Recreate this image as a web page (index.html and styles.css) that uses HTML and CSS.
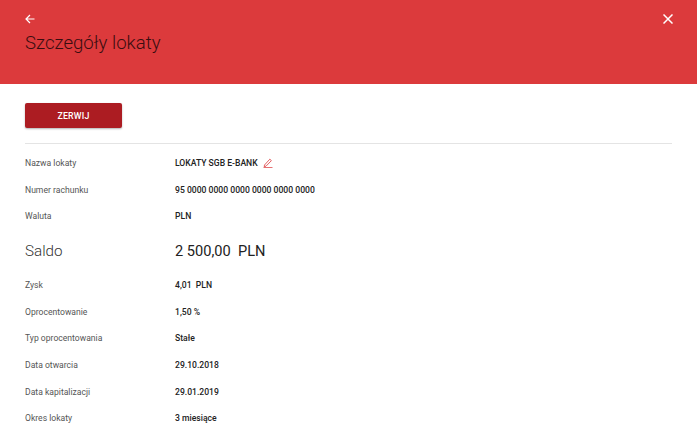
FILE: index.html
```html
<!DOCTYPE html>
<html lang="pl">

<head>
    <meta charset="UTF-8">
    <meta name="viewport" content="width=device-width, initial-scale=1.0">
    <title>Szczegóły lokaty</title>
    <link rel="stylesheet" href="styles.css">
</head>

<body>

    <header class="top">
        <div class="top-icons">
            <svg class="back" width="10" height="10" viewBox="0 0 10 10" fill="none" stroke="#fff" stroke-width="1.2">
                <path d="M9.5 5H1M5 1L1 5l4 4"/>
            </svg>
            <svg class="close" width="10" height="10" viewBox="0 0 10 10" fill="none" stroke="#fff" stroke-width="1.5">
                <path d="M0.5 0.5l9 9M9.5 0.5l-9 9"/>
            </svg>
        </div>
        <h1>Szczegóły lokaty</h1>
    </header>

    <main class="content">
        <div class="actions">
            <button class="break-btn">ZERWIJ</button>
        </div>

        <div class="row">
            <span class="label">Nazwa lokaty</span>
            <span class="value"><span>LOKATY SGB E-BANK</span><svg class="edit" width="10" height="10" viewBox="0 0 10 10" fill="none" stroke="#dc3a3c" stroke-width="0.8"><path d="M1.5 7L6.8 1.2l1.6 1.4L3 8.2 1.2 8.6zM0.5 9.6h9"/></svg></span>
        </div>
        <div class="row">
            <span class="label">Numer rachunku</span>
            <span class="value">95 0000 0000 0000 0000 0000 0000</span>
        </div>
        <div class="row">
            <span class="label">Waluta</span>
            <span class="value">PLN</span>
        </div>
        <div class="row row-big">
            <span class="label">Saldo</span>
            <span class="value">2 500,00 &nbsp;PLN</span>
        </div>
        <div class="row">
            <span class="label">Zysk</span>
            <span class="value">4,01 &nbsp;PLN</span>
        </div>
        <div class="row">
            <span class="label">Oprocentowanie</span>
            <span class="value">1,50 %</span>
        </div>
        <div class="row">
            <span class="label">Typ oprocentowania</span>
            <span class="value">Stałe</span>
        </div>
        <div class="row">
            <span class="label">Data otwarcia</span>
            <span class="value">29.10.2018</span>
        </div>
        <div class="row">
            <span class="label">Data kapitalizacji</span>
            <span class="value">29.01.2019</span>
        </div>
        <div class="row">
            <span class="label">Okres lokaty</span>
            <span class="value">3 miesiące</span>
        </div>
        <div class="row">
            <span class="label">Dyspozycja po zakończeniu</span>
            <span class="value">Wypłata kapitału z odsetkami</span>
        </div>
    </main>

</body>

</html>
```

FILE: styles.css
```css
html, body {
    height: 100%;
}

body {
    font-family: Roboto, Arial, sans-serif;
    background-color: #fff;
    margin: 0;
    padding: 0;
    color: #222;
    overflow: hidden;
}

.top {
    background-color: #dc3a3c;
    height: 84px;
    padding: 14px 25px 0;
    box-sizing: border-box;
}

.top-icons {
    display: flex;
    justify-content: space-between;
    align-items: center;
    height: 10px;
}

.top-icons .close {
    margin-right: -1px;
}

.top h1 {
    margin: 7px 0 0;
    font-size: 18.6px;
    font-weight: 300;
    line-height: 24px;
    color: #3a0d10;
}

.content {
    padding: 19px 25px 0;
}

.actions {
    padding-bottom: 15px;
    border-bottom: 1px solid #e4e4e4;
    margin-bottom: 5.5px;
}

.break-btn {
    display: block;
    width: 97px;
    height: 25px;
    padding: 0;
    background-color: #ac1c22;
    color: #fff;
    border: none;
    border-radius: 2px;
    font-family: inherit;
    font-size: 8.8px;
    font-weight: 500;
    letter-spacing: 0.2px;
    box-shadow: 0 1px 2px rgba(0, 0, 0, 0.3);
}

.row {
    display: flex;
    align-items: center;
    height: 26.7px;
    font-size: 8.6px;
}

.label {
    width: 150px;
    color: #555;
    font-weight: 400;
}

.value {
    color: #222;
    font-weight: 500;
    display: flex;
    align-items: center;
}

.edit {
    margin-left: 5px;
}

.row-big {
    height: 42px;
}

.row-big .label {
    font-size: 15.2px;
    font-weight: 300;
    color: #333;
}

.row-big .value {
    font-size: 14.6px;
    font-weight: 400;
    color: #222;
}
```
